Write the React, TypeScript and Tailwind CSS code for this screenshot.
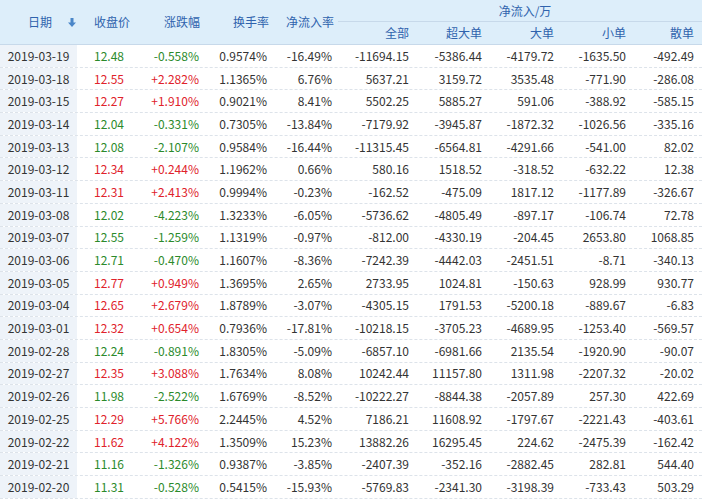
const rows: string[][] = [
  ["2019-03-19","12.48","-0.558%","0.9574%","-16.49%","-11694.15","-5386.44","-4179.72","-1635.50","-492.49"],
  ["2019-03-18","12.55","+2.282%","1.1365%","6.76%","5637.21","3159.72","3535.48","-771.90","-286.08"],
  ["2019-03-15","12.27","+1.910%","0.9021%","8.41%","5502.25","5885.27","591.06","-388.92","-585.15"],
  ["2019-03-14","12.04","-0.331%","0.7305%","-13.84%","-7179.92","-3945.87","-1872.32","-1026.56","-335.16"],
  ["2019-03-13","12.08","-2.107%","0.9584%","-16.44%","-11315.45","-6564.81","-4291.66","-541.00","82.02"],
  ["2019-03-12","12.34","+0.244%","1.1962%","0.66%","580.16","1518.52","-318.52","-632.22","12.38"],
  ["2019-03-11","12.31","+2.413%","0.9994%","-0.23%","-162.52","-475.09","1817.12","-1177.89","-326.67"],
  ["2019-03-08","12.02","-4.223%","1.3233%","-6.05%","-5736.62","-4805.49","-897.17","-106.74","72.78"],
  ["2019-03-07","12.55","-1.259%","1.1319%","-0.97%","-812.00","-4330.19","-204.45","2653.80","1068.85"],
  ["2019-03-06","12.71","-0.470%","1.1607%","-8.36%","-7242.39","-4442.03","-2451.51","-8.71","-340.13"],
  ["2019-03-05","12.77","+0.949%","1.3695%","2.65%","2733.95","1024.81","-150.63","928.99","930.77"],
  ["2019-03-04","12.65","+2.679%","1.8789%","-3.07%","-4305.15","1791.53","-5200.18","-889.67","-6.83"],
  ["2019-03-01","12.32","+0.654%","0.7936%","-17.81%","-10218.15","-3705.23","-4689.95","-1253.40","-569.57"],
  ["2019-02-28","12.24","-0.891%","1.8305%","-5.09%","-6857.10","-6981.66","2135.54","-1920.90","-90.07"],
  ["2019-02-27","12.35","+3.088%","1.7634%","8.08%","10242.44","11157.80","1311.98","-2207.32","-20.02"],
  ["2019-02-26","11.98","-2.522%","1.6769%","-8.52%","-10222.27","-8844.38","-2057.89","257.30","422.69"],
  ["2019-02-25","12.29","+5.766%","2.2445%","4.52%","7186.21","11608.92","-1797.67","-2221.43","-403.61"],
  ["2019-02-22","11.62","+4.122%","1.3509%","15.23%","13882.26","16295.45","224.62","-2475.39","-162.42"],
  ["2019-02-21","11.16","-1.326%","0.9387%","-3.85%","-2407.39","-352.16","-2882.45","282.81","544.40"],
  ["2019-02-20","11.31","-0.528%","0.5415%","-15.93%","-5769.83","-2341.30","-3198.39","-733.43","503.29"],
];
const widths = ["w-[77px]","w-[53px]","w-[75px]","w-[68px]","w-[65px]","w-[77px]","w-[73px]","w-[72px]","w-[72px]","w-[68px]"];
const font = { fontFamily: '"Microsoft YaHei","Noto Sans CJK SC",sans-serif' };

export default function App() {
  return (
    <div className="w-[702px] h-[500px] overflow-hidden bg-white text-[12px]" style={font}>
      <div className="flex h-[45px] bg-[#ddeefa] text-[#2f63ad] border-b border-[#c7d9ea]">
        <div className="w-[77px] flex items-center pl-[28px] gap-[16px]">
          <span>日期</span>
          <svg width="8" height="9" viewBox="0 0 8 9"><path d="M2.5 0h3v4.5H8L4 9 0 4.5h2.5z" fill="#4a86c8" /></svg>
        </div>
        <div className="w-[53px] flex items-center justify-end pr-0">收盘价</div>
        <div className="w-[75px] flex items-center justify-end pr-[5px]">涨跌幅</div>
        <div className="w-[68px] flex items-center justify-end pr-[4px]">换手率</div>
        <div className="w-[65px] flex items-center justify-end pr-[4px]">净流入率</div>
        <div className="flex-1 flex flex-col">
          <div className="h-[22px] flex items-center justify-center border-b border-[#c7d9ea] pl-[10px]">净流入/万</div>
          <div className="flex-1 flex">
            {["全部","超大单","大单","小单","散单"].map((t, i) => (
              <div key={t} className={`${widths[i + 5]} flex items-center justify-end pr-[6px]`}>{t}</div>
            ))}
          </div>
        </div>
      </div>
      {rows.map((r) => (
        <div key={r[0]} className="flex h-[22.7px] border-b border-dashed border-[#dde3ea] text-[#333]">
          {r.map((c, i) => {
            let color = "";
            if (i === 1 || i === 2) color = r[2].startsWith("-") ? "text-[#2b8a2b]" : "text-[#e0222b]";
            return (
              <div
                key={i}
                className={`${widths[i]} flex items-center ${i === 0 ? "justify-center bg-[#eef3f9]" : "justify-end pr-[6px]"} ${color}`}
              >
                {c}
              </div>
            );
          })}
        </div>
      ))}
    </div>
  );
}
